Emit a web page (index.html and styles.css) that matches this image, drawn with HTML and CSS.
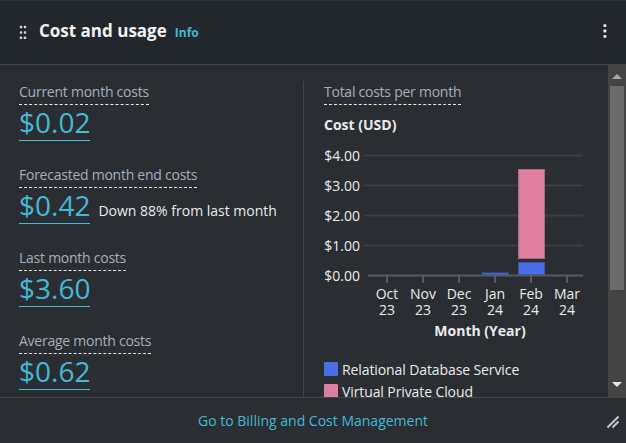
FILE: index.html
```html
<!DOCTYPE html>
<html lang="en">
<head>
<meta charset="utf-8">
<title>Cost and usage</title>
<link rel="stylesheet" href="styles.css">
</head>
<body>
<div class="card">
  <header class="card-header">
    <span class="drag" aria-hidden="true">
      <svg width="8" height="14" viewBox="0 0 8 14">
        <rect x="0.8" y="0.8" width="2.4" height="2.4" rx="0.6"/>
        <rect x="4.8" y="0.8" width="2.4" height="2.4" rx="0.6"/>
        <rect x="0.8" y="6.3" width="2.4" height="2.4" rx="0.6"/>
        <rect x="4.8" y="6.3" width="2.4" height="2.4" rx="0.6"/>
        <rect x="0.8" y="11.6" width="2.4" height="2.4" rx="0.6"/>
        <rect x="4.8" y="11.6" width="2.4" height="2.4" rx="0.6"/>
      </svg>
    </span>
    <div class="title-group">
      <h2 class="title">Cost and usage</h2>
      <a class="info" href="#">Info</a>
    </div>
    <button class="kebab" aria-label="Settings">
      <svg width="4" height="15" viewBox="0 0 4 15">
        <rect x="0.4" y="0.2" width="3" height="2.8" rx="0.8"/>
        <rect x="0.4" y="5.6" width="3" height="2.8" rx="0.8"/>
        <rect x="0.4" y="11" width="3" height="2.8" rx="0.8"/>
      </svg>
    </button>
  </header>

  <div class="card-body">
    <div class="content">
      <div class="metrics">
        <div class="metric">
          <div class="label"><span class="dashed">Current month costs</span></div>
          <div class="value-row"><a class="value" href="#">$0.02</a></div>
        </div>
        <div class="metric">
          <div class="label"><span class="dashed">Forecasted month end costs</span></div>
          <div class="value-row"><a class="value" href="#">$0.42</a><span class="delta">Down 88% from last month</span></div>
        </div>
        <div class="metric">
          <div class="label"><span class="dashed">Last month costs</span></div>
          <div class="value-row"><a class="value" href="#">$3.60</a></div>
        </div>
        <div class="metric">
          <div class="label"><span class="dashed">Average month costs</span></div>
          <div class="value-row"><a class="value" href="#">$0.62</a></div>
        </div>
      </div>
      <div class="divider"></div>
      <div class="chart-col">
        <div class="label"><span class="dashed">Total costs per month</span></div>
        <div class="chart-title">Cost (USD)</div>
        <svg class="chart" width="264" height="206" viewBox="0 0 264 206">
          <g class="grid">
            <line x1="40" y1="15.5" x2="259" y2="15.5"/>
            <line x1="40" y1="45.5" x2="259" y2="45.5"/>
            <line x1="40" y1="75.5" x2="259" y2="75.5"/>
            <line x1="40" y1="105.5" x2="259" y2="105.5"/>
          </g>
          <g class="ylabels">
            <text x="36" y="21">$4.00</text>
            <text x="36" y="51">$3.00</text>
            <text x="36" y="81">$2.00</text>
            <text x="36" y="111">$1.00</text>
            <text x="36" y="141">$0.00</text>
          </g>
          <g class="bars">
            <rect class="rds" x="158.5" y="133" width="26" height="2"/>
            <rect class="vpc" x="194.5" y="29.5" width="26" height="89"/>
            <rect class="rds" x="194.5" y="122.5" width="26" height="12"/>
          </g>
          <line class="axis" x1="44" y1="135.5" x2="259" y2="135.5"/>
          <g class="ticks">
            <line x1="63" y1="136" x2="63" y2="143"/>
            <line x1="99" y1="136" x2="99" y2="143"/>
            <line x1="135" y1="136" x2="135" y2="143"/>
            <line x1="171" y1="136" x2="171" y2="143"/>
            <line x1="207" y1="136" x2="207" y2="143"/>
            <line x1="243" y1="136" x2="243" y2="143"/>
          </g>
          <g class="xlabels">
            <text y="159"><tspan x="63">Oct</tspan><tspan x="63" dy="16">23</tspan></text>
            <text y="159"><tspan x="99">Nov</tspan><tspan x="99" dy="16">23</tspan></text>
            <text y="159"><tspan x="135">Dec</tspan><tspan x="135" dy="16">23</tspan></text>
            <text y="159"><tspan x="171">Jan</tspan><tspan x="171" dy="16">24</tspan></text>
            <text y="159"><tspan x="207">Feb</tspan><tspan x="207" dy="16">24</tspan></text>
            <text y="159"><tspan x="243">Mar</tspan><tspan x="243" dy="16">24</tspan></text>
          </g>
          <text class="xtitle" x="156" y="196">Month (Year)</text>
        </svg>
        <ul class="legend">
          <li><span class="swatch rds-swatch"></span>Relational Database Service</li>
          <li><span class="swatch vpc-swatch"></span>Virtual Private Cloud</li>
        </ul>
      </div>
    </div>
    <div class="scrollbar" aria-hidden="true">
      <span class="sb-up"></span>
      <span class="sb-thumb"></span>
      <span class="sb-down"></span>
    </div>
  </div>

  <footer class="card-footer">
    <a class="footer-link" href="#">Go to Billing and Cost Management</a>
    <svg class="resize" width="14" height="14" viewBox="0 0 14 14" aria-hidden="true">
      <line x1="1.5" y1="12.5" x2="12.5" y2="1.5"/>
      <line x1="6.5" y1="12.5" x2="12.5" y2="6.5"/>
    </svg>
  </footer>
</div>
</body>
</html>
```

FILE: styles.css
```css
* { box-sizing: border-box; }

html, body {
  margin: 0;
  padding: 0;
  background: #2a2e33;
}

body {
  font-family: "Open Sans", "Noto Sans", sans-serif;
  color: #e9ebed;
}

a { text-decoration: none; }

.card {
  width: 626px;
  height: 443px;
  display: flex;
  flex-direction: column;
  background: #2a2e33;
}

/* Header */
.card-header {
  height: 65px;
  flex: none;
  display: flex;
  align-items: flex-start;
  padding: 18px 19px 0 19px;
  background: #22262d;
  border-top: 1px solid #2d3139;
  border-bottom: 1px solid #41464f;
}

.drag {
  display: flex;
  margin-top: 6px;
  width: 8px;
}
.drag svg { fill: #d1d5db; }

.title-group {
  display: flex;
  align-items: baseline;
  margin-left: 12px;
}

.title {
  margin: 0;
  font-size: 17px;
  line-height: 24px;
  font-weight: 700;
  color: #f2f3f3;
}

.info {
  margin-left: 8px;
  font-size: 12px;
  font-weight: 700;
  color: #44b9d6;
}

.kebab {
  margin-left: auto;
  margin-top: 5px;
  margin-right: 0;
  padding: 0;
  border: 0;
  background: none;
  display: flex;
}
.kebab svg { fill: #e9ebed; }

/* Body */
.card-body {
  flex: 1;
  display: flex;
  min-height: 0;
}

.content {
  flex: 1;
  display: flex;
  overflow: hidden;
  padding: 17px 0 0 19px;
}

.metrics {
  width: 284px;
  flex: none;
}

.metric + .metric { margin-top: 24px; }

.label {
  display: flex;
  font-size: 14px;
  letter-spacing: -0.25px;
  color: #a3afbb;
}

.dashed {
  display: block;
  line-height: 20px;
  padding-bottom: 2px;
  border-bottom: 1px dashed #e9ebed;
}

.value-row {
  display: flex;
  align-items: baseline;
  gap: 8px;
}

.value {
  display: block;
  font-size: 28px;
  line-height: 35px;
  color: #44b9d6;
  border-bottom: 1px solid #44b9d6;
}

.delta {
  font-size: 14px;
  color: #e9ebed;
}

.divider {
  width: 1px;
  flex: none;
  background: #41464f;
  margin-top: -1px;
}

.chart-col {
  padding-left: 20px;
  flex: none;
  width: 286px;
}

.chart-title {
  margin-top: 10px;
  font-size: 14px;
  line-height: 20px;
  font-weight: 700;
  color: #e9ebed;
}

.chart {
  display: block;
  margin-top: 5px;
  font-family: "Open Sans", "Noto Sans", sans-serif;
  font-size: 14px;
}

.grid line { stroke: #3a3f47; stroke-width: 2; }
.axis { stroke: #545b64; stroke-width: 2; }
.ticks line { stroke: #545b64; stroke-width: 2; }

.ylabels text { fill: #e9ebed; text-anchor: end; }
.xlabels text { fill: #e9ebed; text-anchor: middle; }
.xtitle { fill: #e9ebed; text-anchor: middle; font-weight: 700; }

.bars .rds { fill: #4b6ee8; stroke: #3d56b0; stroke-width: 1; }
.bars .vpc { fill: #df7f9f; stroke: #b06580; stroke-width: 1; }

.legend {
  list-style: none;
  margin: 12px 0 0 0;
  padding: 0;
  font-size: 14px;
  letter-spacing: -0.1px;
  color: #e9ebed;
}

.legend li {
  display: flex;
  align-items: center;
  height: 22px;
}

.swatch {
  width: 14px;
  height: 14px;
  margin-right: 4px;
  border-radius: 1px;
  flex: none;
}
.rds-swatch { background: #4b6ee8; }
.vpc-swatch { background: #df7f9f; }

/* Fake scrollbar */
.scrollbar {
  width: 18px;
  flex: none;
  background: #444444;
  display: flex;
  flex-direction: column;
  align-items: center;
}

.sb-up {
  margin-top: 9px;
  width: 0;
  height: 0;
  border-left: 5px solid transparent;
  border-right: 5px solid transparent;
  border-bottom: 5px solid #a8a8a8;
}

.sb-thumb {
  margin-top: 7px;
  width: 14px;
  height: 204px;
  background: #6b6b6b;
}

.sb-down {
  margin-top: auto;
  margin-bottom: 10px;
  width: 0;
  height: 0;
  border-left: 5px solid transparent;
  border-right: 5px solid transparent;
  border-top: 5px solid #e6e6e6;
}

/* Footer */
.card-footer {
  height: 46px;
  flex: none;
  position: relative;
  display: flex;
  align-items: center;
  justify-content: center;
  border-top: 1px solid #41464f;
  background: #2a2e33;
}

.footer-link {
  font-size: 14px;
  line-height: 20px;
  color: #44b9d6;
}

.resize {
  position: absolute;
  right: 6px;
  bottom: 14px;
  stroke: #c6c6cd;
  stroke-width: 2;
}
```
